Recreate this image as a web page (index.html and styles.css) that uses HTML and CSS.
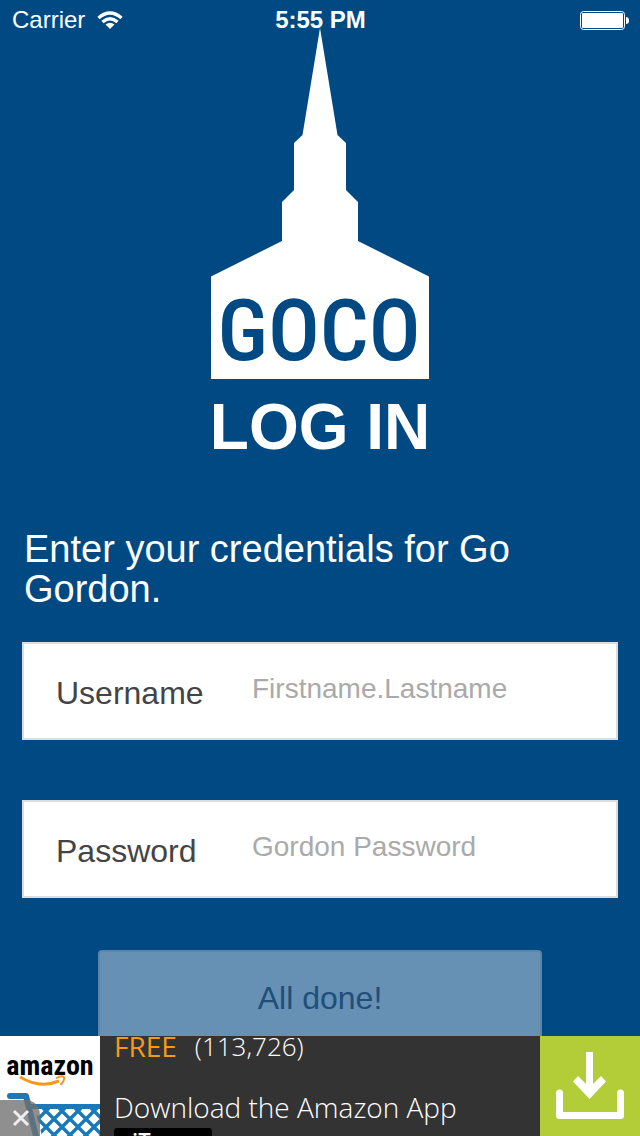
FILE: index.html
```html
<!DOCTYPE html>
<html lang="en">
<head>
<meta charset="utf-8">
<meta name="viewport" content="width=device-width">
<title>Go Gordon – Log In</title>
<link rel="stylesheet" href="styles.css">
</head>
<body>
<header class="status">
  <div class="carrier">Carrier
    <svg class="wifi" viewBox="0 0 26 18" aria-label="Wi-Fi"><path d="M1.500 7Q13-3 24.500 7M5.500 11Q13 4.500 20.500 11" fill="none" stroke="#fff" stroke-width="3.400"/><path d="M8.500 13.500Q13 10 17.500 13.500L13 18Z" fill="#fff"/></svg>
  </div>
  <time class="time">5:55 PM</time>
  <svg class="battery" viewBox="0 0 49 19" aria-label="Battery full"><rect x=".5" y=".5" width="44" height="18" rx="3" fill="none" stroke="#fff"/><rect x="2" y="2" width="41" height="15" rx="1" fill="#fff"/><path d="M46 6Q49 6 49 9.500Q49 13 46 13Z" fill="#fff"/></svg>
</header>
<main class="screen">
  <svg class="logo" viewBox="0 0 218 351" role="img" aria-label="GOCO">
    <path d="M109 0L126.500 107L135 115V162L147 174V213L218 248.500V351H0V248.500L71 213V174L83 162V115L91.500 107Z" fill="#fff"/>
    <text class="logo-text" x="108" y="332" text-anchor="middle">GOCO</text>
  </svg>
  <h1 class="title">LOG IN</h1>
  <form class="form">
    <p class="intro">Enter your credentials for Go Gordon.</p>
    <div class="field">
      <label for="username">Username</label>
      <input id="username" type="text" placeholder="Firstname.Lastname">
    </div>
    <div class="field">
      <label for="password">Password</label>
      <input id="password" type="password" placeholder="Gordon Password">
    </div>
    <button class="submit" type="submit">All done!</button>
  </form>
</main>
<aside class="ad">
  <div class="brand">
    <div class="brand-name">amazon</div>
    <svg class="brand-art" viewBox="0 0 100 100" aria-hidden="true">
      <defs><clipPath id="basket"><path d="M34 70H100V100H42Z"/></clipPath></defs>
      <path d="M20 41Q40 53 59 45" fill="none" stroke="#f7981d" stroke-width="3"/>
      <path d="M56 42.500Q61 39 64 41Q65 44 60.500 49" fill="none" stroke="#f7981d" stroke-width="2"/>
      <path d="M10 60H26L37 104" fill="none" stroke="#1b79b8" stroke-width="6" stroke-linecap="round" stroke-linejoin="round"/>
      <path d="M31 68H100V73H32Z" fill="#1b79b8"/>
      <path clip-path="url(#basket)" d="M-5 40L71 116M11 40L87 116M27 40L103 116M43 40L119 116M59 40L135 116M-21 40L55 116M81 56L21 116M97 56L37 116M113 56L53 116M129 56L69 116M145 56L85 116M65 56L5 116" stroke="#1b79b8" stroke-width="3.500"/>
    </svg>
    <button class="close" type="button" aria-label="Close ad"><svg viewBox="0 0 40 36"><path d="M0 0H29Q40 4 40 16V36H0Z" fill="#707070" fill-opacity=".78"/><path d="M14 11L28 25M28 11L14 25" stroke="#eee" stroke-width="3"/></svg></button>
  </div>
  <div class="copy">
    <div class="price"><strong>FREE</strong><span>(113,726)</span></div>
    <div class="pitch">Download the Amazon App</div>
    <div class="store">iT</div>
  </div>
  <a class="download" href="#" aria-label="Download">
    <svg viewBox="0 0 100 100"><path d="M19.500 57V79.500H80.500V57" fill="none" stroke="#fff" stroke-width="7" stroke-linecap="round" stroke-linejoin="round"/><path d="M46 16H53V48L61 40L66 45.500L49.500 63L33 45.500L38 40L46 48Z" fill="#fff"/></svg>
  </a>
</aside>
</body>
</html>
```
FILE: styles.css
```css
* { box-sizing: border-box; }
body {
  margin: 0;
  height: 100vh;
  overflow: hidden;
  position: relative;
  background: #004983;
  color: #fff;
  font-family: "Liberation Sans", Arial, sans-serif;
}
.status {
  position: absolute;
  inset: 0 0 auto;
  height: 40px;
  padding: 0 11px 0 12px;
  display: grid;
  grid-template-columns: 1fr auto 1fr;
  align-items: center;
  font-size: 24px;
  line-height: 40px;
}
.carrier { display: flex; align-items: center; gap: 12px; }
.wifi { width: 26px; height: 18px; }
.time { font-weight: 700; }
.battery { width: 49px; height: 19px; justify-self: end; }
.screen {
  display: flex;
  flex-direction: column;
  align-items: center;
  padding: 28px 22px 0;
}
.logo { width: 218px; height: 351px; }
.logo-text {
  font: 500 86px "Roboto Condensed", "Liberation Sans Narrow", "Liberation Sans", sans-serif;
  fill: #004983;
}
.title { margin: 12px 0 0; font-size: 64px; line-height: 72px; }
.form {
  width: 100%;
  margin-top: 66px;
  display: flex;
  flex-direction: column;
}
.intro { margin: 0 2px 33px; font-size: 38px; line-height: 40px; }
.field {
  display: flex;
  height: 98px;
  margin-bottom: 60px;
  border: 2px solid #ddd;
  background: #fff;
}
.field label {
  width: 228px;
  padding: 2px 0 0 32px;
  color: #444;
  font-size: 32px;
  line-height: 94px;
}
.field input {
  flex: 1;
  min-width: 0;
  padding: 0 12px 4px 0;
  border: 0;
  outline: 0;
  background: none;
  color: #444;
  font: 28px "Liberation Sans", Arial, sans-serif;
}
.field input::placeholder { color: #aaa; opacity: 1; }
.submit {
  margin: -8px 76px 0;
  height: 98px;
  padding: 0 0 2px;
  border: 2px solid #5d85a9;
  border-radius: 4px;
  background: #6690b4;
  color: #1f4f79;
  font: 32px "Liberation Sans", Arial, sans-serif;
}
.ad {
  position: absolute;
  inset: auto 0 0;
  height: 100px;
  display: grid;
  grid-template-columns: 100px 1fr 100px;
  overflow: hidden;
  background: #333;
  font-family: "Open Sans", sans-serif;
}
.brand { position: relative; overflow: hidden; background: #fff; }
.brand-name {
  padding-top: 13px;
  text-align: center;
  color: #000;
  font: 700 28px/34px "Roboto Condensed", "Open Sans", sans-serif;
}
.brand-art { position: absolute; inset: 0; width: 100%; height: 100%; }
.close {
  position: absolute;
  left: 0;
  bottom: 0;
  width: 40px;
  height: 36px;
  padding: 0;
  border: 0;
  background: none;
}
.close svg { display: block; }
.copy { padding: 0 14px; font-weight: 300; overflow: hidden; white-space: nowrap; }
.price { display: flex; gap: 18px; font-size: 26px; line-height: 21px; }
.price strong { color: #f7981d; font-size: 28px; font-weight: 500; }
.pitch { margin-top: 31px; font-size: 28px; line-height: 38px; }
.store {
  width: 98px;
  height: 40px;
  margin-top: 2px;
  padding-left: 18px;
  border-radius: 3px;
  background: #000;
  font: 600 22px/24px "Open Sans", sans-serif;
}
.download { display: block; background: #b3cd38; }
.download svg { display: block; width: 100%; }
```
